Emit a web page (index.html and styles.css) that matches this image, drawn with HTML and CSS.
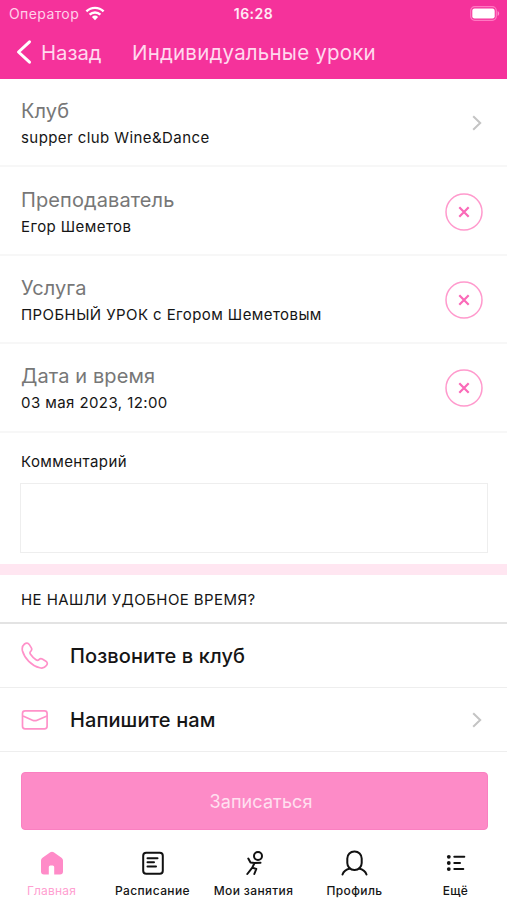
FILE: index.html
```html
<!DOCTYPE html>
<html lang="ru">
<head>
<meta charset="utf-8">
<meta name="viewport" content="width=device-width, initial-scale=1">
<title>Индивидуальные уроки</title>
<link rel="stylesheet" href="styles.css">
</head>
<body>
<div class="app">
  <header class="header">
    <div class="status">
      <div class="status-left"><span class="carrier">Оператор</span>
        <svg class="wifi" width="20" height="15" viewBox="0 0 20 15" fill="none" stroke="#fff" stroke-width="2.4"><path d="M1.4 5.3a12.4 12.4 0 0 1 17.2 0"/><path d="M4.6 8.6a7.8 7.8 0 0 1 10.8 0"/><path d="M10 14.2 6.9 11a4.5 4.5 0 0 1 6.2 0z" fill="#fff" stroke="none"/></svg>
      </div>
      <span class="clock">16:28</span>
      <div class="status-right">
        <svg width="30" height="15" viewBox="0 0 30 15"><rect x=".7" y=".7" width="25.6" height="13.6" rx="4" fill="none" stroke="#ff78c2" stroke-width="1.2"/><rect x="2.3" y="2.5" width="22.4" height="10" rx="2.2" fill="#fff"/><path d="M27.6 5v5c2-.8 2-4.2 0-5z" fill="#ff8fcd"/></svg>
      </div>
    </div>
    <nav class="nav">
      <svg class="back-icon" width="16" height="26" viewBox="0 0 16 26" fill="none" stroke="#fff" stroke-width="3" stroke-linecap="round" stroke-linejoin="round"><path d="M13.500 2.800 2.500 13l11 10.200"/></svg>
      <a class="back">Назад</a>
      <h1 class="title">Индивидуальные уроки</h1>
    </nav>
  </header>

  <main class="content">
    <section class="field">
      <div class="field-text"><span class="label">Клуб</span><span class="value">supper club Wine&amp;Dance</span></div>
      <svg class="chevron" width="10" height="16" viewBox="0 0 10 16"><path d="m1.2 1.2 7 6.8-7 6.8"/></svg>
    </section>
    <section class="field">
      <div class="field-text"><span class="label">Преподаватель</span><span class="value">Егор Шеметов</span></div>
      <svg class="clear" width="38" height="38" viewBox="0 0 38 38"><circle cx="19" cy="19" r="18"/><path d="m14.3 14.3 9.4 9.4m0-9.4-9.4 9.4"/></svg>
    </section>
    <section class="field">
      <div class="field-text"><span class="label">Услуга</span><span class="value">ПРОБНЫЙ УРОК с Егором Шеметовым</span></div>
      <svg class="clear" width="38" height="38" viewBox="0 0 38 38"><circle cx="19" cy="19" r="18"/><path d="m14.3 14.3 9.4 9.4m0-9.4-9.4 9.4"/></svg>
    </section>
    <section class="field">
      <div class="field-text"><span class="label">Дата и время</span><span class="value">03 мая 2023, 12:00</span></div>
      <svg class="clear" width="38" height="38" viewBox="0 0 38 38"><circle cx="19" cy="19" r="18"/><path d="m14.3 14.3 9.4 9.4m0-9.4-9.4 9.4"/></svg>
    </section>
    <section class="comment">
      <span class="comment-label">Комментарий</span>
      <div class="comment-box"></div>
    </section>
    <h2 class="section-title">НЕ НАШЛИ УДОБНОЕ ВРЕМЯ?</h2>
    <a class="contact">
      <svg class="contact-icon" width="28" height="28" viewBox="0 0 28 28"><path d="M3.500 2C5.300.6 7 .8 8.200 2.400l2 3.200c1 1.600.7 2.600-.5 3.700-1.200 1-1 1.700-.2 2.900 1.500 2.200 3.300 4 5.500 5.600 1.200.9 2 .9 3-.2 1.100-1.200 2.200-1.300 3.700-.4l3.200 2.100c1.700 1.100 1.800 2.600.5 4.300-1.600 2.200-3.700 3-6.600 2.200C10.500 23.500 3.500 16.300 1.500 9 .8 6.200 1.400 3.700 3.500 2z"/></svg>
      <span class="contact-name">Позвоните в клуб</span>
    </a>
    <a class="contact">
      <svg class="contact-icon" width="28" height="28" viewBox="0 0 28 28"><rect x="1.500" y="4.800" width="24.600" height="18" rx="2.600"/><path d="m2 10 9.500 4.200q2.300 1 4.600 0L26 10"/></svg>
      <span class="contact-name">Напишите нам</span>
      <svg class="chevron" width="10" height="16" viewBox="0 0 10 16"><path d="m1.200 1.200 7 6.800-7 6.800"/></svg>
    </a>
    <button class="submit">Записаться</button>
  </main>

  <nav class="tabs">
    <a class="tab active"><svg width="28" height="28" viewBox="0 0 28 28"><path d="M12.300 3.300 4.500 8.700Q3 9.800 3 11.500v11Q3 25.500 6 25.500h4.800V18q0-1.500 1.500-1.500h2.400q1.500 0 1.500 1.500v7.500H22q3 0 3-3v-11q0-1.700-1.500-2.800l-7.800-5.400q-1.700-1.200-3.400 0z" fill="#ff8bc8"/></svg><span>Главная</span></a>
    <a class="tab"><svg width="28" height="28" viewBox="0 0 28 28"><rect x="4.200" y="3.700" width="19.600" height="21" rx="3"/><path d="M8.500 9.200h10M8.500 13.300h6.500M8.500 17.500h8.500"/></svg><span>Расписание</span></a>
    <a class="tab"><svg width="28" height="28" viewBox="0 0 28 28"><circle cx="18" cy="7" r="4"/><path d="M8.300 9.600 10.500 13.500 14.500 14l6-.3M14.500 14l-2.200 4.600L7.300 25M12.300 18.600l4 1.400-2 5"/></svg><span>Мои занятия</span></a>
    <a class="tab"><svg width="28" height="28" viewBox="0 0 28 28"><rect x="6.300" y="2.500" width="14.400" height="18.500" rx="7"/><path d="M1.500 25.500q1.500-4.600 7.500-6M25.500 25.500q-1.500-4.600-7.500-6"/></svg><span>Профиль</span></a>
    <a class="tab"><svg width="28" height="28" viewBox="0 0 28 28"><path d="M12.300 7.800h10M12.300 14h5.700M12.300 20.100h9"/><g fill="#111" stroke="none"><circle cx="6.800" cy="7.800" r="1.900"/><circle cx="6.800" cy="14" r="1.900"/><circle cx="6.800" cy="20.100" r="1.900"/></g></svg><span>Ещё</span></a>
  </nav>
</div>
</body>
</html>
```
FILE: styles.css
```css
* { box-sizing: border-box; }
body { margin: 0; background: #fff; color: #151515; font-family: Inter, "Liberation Sans", sans-serif; }
.app { width: 507px; height: 900px; display: flex; flex-direction: column; overflow: hidden; }
.header { height: 79px; background: #f5329b; color: #fff; flex: none; }
.status { height: 27px; display: grid; grid-template-columns: 1fr auto 1fr; align-items: center; padding: 0 7px 0 9px; }
.status-left { display: flex; align-items: center; gap: 6px; }
.carrier { font-size: 14px; letter-spacing: .4px; color: #ffd0ea; }
.clock { margin-left: -2px; font-size: 14px; font-weight: 600; letter-spacing: .5px; color: #ffe9f5; }
.status-right { display: flex; justify-content: flex-end; }
.nav { height: 52px; display: flex; align-items: center; padding: 0 0 2px 16px; }
.back { margin-left: 9px; width: 91px; font-size: 20.300px; line-height: 26px; padding-top: 1px; color: #ffd9ee; }
.title { margin: 0; padding-top: 1px; font-size: 20.500px; line-height: 26px; font-weight: 400; color: #ffd9ee; letter-spacing: .2px; white-space: nowrap; }
.content { flex: 1; }
.field { height: 88.400px; display: flex; align-items: center; justify-content: space-between; padding: 2px 24px 0 21px; border-bottom: 2px solid #f7f7f7; }
.field-text { display: flex; flex-direction: column; padding-top: 3px; }
.label { font-size: 20px; line-height: 27px; color: #777; letter-spacing: .1px; }
.value { font-size: 15px; line-height: 26px; letter-spacing: .42px; }
.chevron { fill: none; stroke: #c4c4c4; stroke-width: 2; margin-right: 1px; }
.clear { fill: none; stroke: #ff9acd; stroke-width: 1.500; }
.clear path { stroke: #fa69b8; stroke-width: 2.200; }
.comment { height: 142px; padding: 16px 19px 0 20px; border-bottom: 11px solid #ffe6f1; }
.comment-label { display: block; font-size: 15px; line-height: 26px; letter-spacing: .4px; margin-left: 1px; }
.comment-box { height: 70px; margin-top: 8px; border: 1px solid #eee; }
.section-title { margin: 0; height: 49px; padding-left: 21px; font-size: 15px; font-weight: 400; line-height: 50px; letter-spacing: .42px; border-bottom: 2px solid #e3e3e3; }
.contact { height: 64px; display: flex; align-items: center; padding: 2px 24px 0 21px; border-bottom: 1px solid #eee; }
.contact-icon { fill: none; stroke: #ff91c9; stroke-width: 1.700; }
.contact-name { flex: 1; margin-left: 21px; font-size: 20px; font-weight: 500; letter-spacing: .1px; }
.submit { display: block; width: 467px; height: 58px; margin: 20px 0 0 20.500px; padding: 2px 0 0 14px; border: 1px solid #fa80c1; border-radius: 4px; background: #fd8bc7; color: #ffe0f0; font: 400 18px Inter, sans-serif; letter-spacing: .1px; }
.tabs { height: 70px; flex: none; display: grid; grid-template-columns: repeat(5, 101px); padding: 19px 1px 0; }
.tab { display: flex; flex-direction: column; align-items: center; font-size: 12px; font-weight: 500; letter-spacing: .4px; line-height: 16px; white-space: nowrap; }
.tab svg { fill: none; stroke: #111; stroke-width: 2; stroke-linecap: round; stroke-linejoin: round; }
.tab.active { color: #ffa0d1; font-weight: 400; letter-spacing: .2px; }
.tab.active svg { stroke: none; }
.tab span { margin-top: 6px; }
```
